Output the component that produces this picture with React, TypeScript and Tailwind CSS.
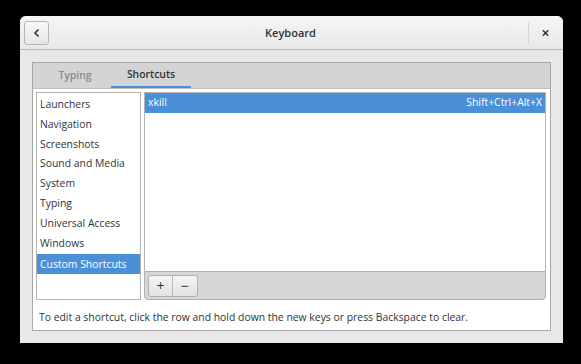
import React from "react";

const categories = [
  "Launchers",
  "Navigation",
  "Screenshots",
  "Sound and Media",
  "System",
  "Typing",
  "Universal Access",
  "Windows",
];

export default function App() {
  return (
    <div className="w-[581px] h-[364px] bg-black pt-[16px] pl-[20px] font-['Open_Sans',sans-serif] text-[10.4px] text-[#2e3436]">
      <div className="w-[543px] h-[327px] rounded-t-[6px] overflow-hidden flex flex-col bg-[#e8e8e8]">
        {/* Header bar */}
        <div className="h-[34px] flex items-center bg-gradient-to-b from-[#f5f5f5] to-[#e9e9e9] border-b border-[#b8b8b8]">
          <div className="pl-[4px]">
            <button className="w-[25px] h-[24px] flex items-center justify-center rounded-[3px] border border-[#b6b6b6] bg-gradient-to-b from-[#f8f8f8] to-[#e6e6e6]">
              <svg width="10" height="10" viewBox="0 0 10 10">
                <path d="M6.5 1.5 L3 5 L6.5 8.5" stroke="#2e3436" strokeWidth="1.6" fill="none" />
              </svg>
            </button>
          </div>
          <div className="flex-1 text-center font-semibold text-[11px] text-[#2e3436] pt-[2px] pl-[4px]">Keyboard</div>
          <div className="h-[34px] flex items-center w-[35px] justify-center">
            <div className="w-[1px] h-[22px] bg-[#d6d6d6] mr-[13px]" />
            <svg width="8" height="8" viewBox="0 0 8 8" className="mr-[14px]">
              <path d="M1 1 L7 7 M7 1 L1 7" stroke="#2e3436" strokeWidth="1.6" />
            </svg>
          </div>
        </div>

        {/* Body */}
        <div className="flex-1 p-[12px]">
          <div className="h-full flex flex-col border border-[#a8a8a8]">
            {/* Tabs */}
            <div className="h-[26px] flex bg-[#d4d4d4] border-b border-[#c0c0c0] pl-[6px]">
              <div className="w-[72px] flex items-center justify-center font-semibold text-[#8a8a8a]">Typing</div>
              <div className="w-[80px] flex items-center justify-center font-semibold text-[#2e3436] border-b-[2px] border-[#4a90d9]">
                Shortcuts
              </div>
            </div>

            {/* Content */}
            <div className="flex-1 bg-white flex flex-col pt-[3px] px-[3px]">
              <div className="flex gap-[3px] h-[208px]">
                <div className="w-[105px] border border-[#b4b4b4] flex flex-col pt-[2px]">
                  {categories.map((c) => (
                    <div key={c} className="h-[19.8px] flex items-center px-[3px]">
                      {c}
                    </div>
                  ))}
                  <div className="h-[20px] mt-[1px] flex items-center px-[3px] bg-[#4a90d9] text-white">
                    Custom Shortcuts
                  </div>
                </div>
                <div className="flex-1 flex flex-col mr-[1px]">
                  <div className="flex-1 border border-[#b4b4b4] border-b-0">
                    <div className="h-[20px] flex items-center justify-between px-[3px] bg-[#4a90d9] text-white">
                      <span>xkill</span>
                      <span>Shift+Ctrl+Alt+X</span>
                    </div>
                  </div>
                  <div className="h-[29px] bg-[#d6d6d6] border border-[#b0b0b0] rounded-b-[4px] flex items-center px-[3px]">
                    <div className="flex h-[22px] border border-[#b0b0b0] rounded-[3px] overflow-hidden bg-gradient-to-b from-[#f6f6f6] to-[#e2e2e2]">
                      <div className="w-[24px] flex items-center justify-center border-r border-[#b8b8b8] text-[14px] leading-none">+</div>
                      <div className="w-[24px] flex items-center justify-center text-[14px] leading-none">−</div>
                    </div>
                  </div>
                </div>
              </div>
              <div className="flex-1 flex items-center px-[3px] pt-[5px]">
                To edit a shortcut, click the row and hold down the new keys or press Backspace to clear.
              </div>
            </div>
          </div>
        </div>
      </div>
    </div>
  );
}
